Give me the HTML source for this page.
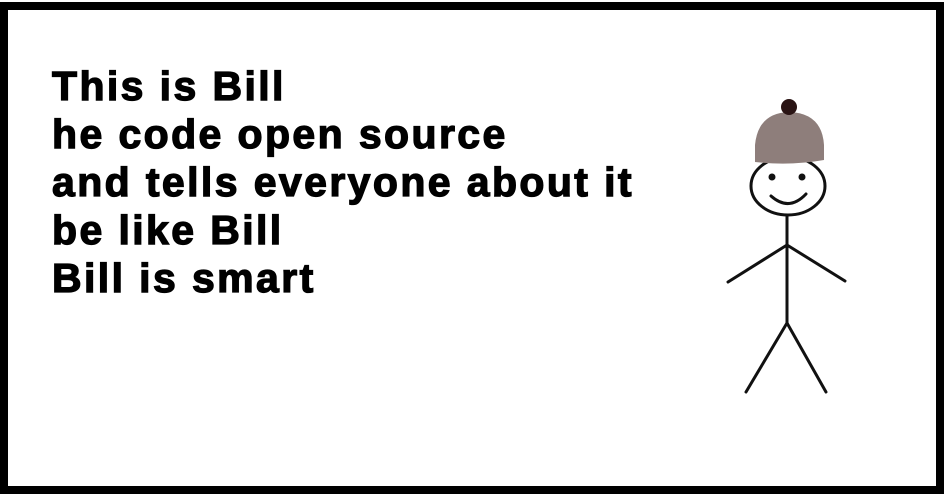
<!DOCTYPE html>
<html><head><style>
html,body{margin:0;padding:0;background:#fff;}
.frame{position:absolute;left:0;top:2px;width:928px;height:476px;border:8px solid #000;background:#fff;}
.t{position:absolute;left:52px;font:bold 41px "Liberation Sans",sans-serif;-webkit-text-stroke:1.3px #000;letter-spacing:2.4px;color:#000;white-space:nowrap;line-height:41px;}
</style></head><body>
<div class="frame"></div>
<div class="t" style="top:66px">This is Bill</div>
<div class="t" style="top:114px">he code open source</div>
<div class="t" style="top:162px">and tells everyone about it</div>
<div class="t" style="top:210px">be like Bill</div>
<div class="t" style="top:258px">Bill is smart</div>
<svg width="944" height="494" style="position:absolute;left:0;top:0">
<g stroke="#111" stroke-width="3" fill="none" stroke-linecap="round">
<ellipse cx="788" cy="186" rx="37" ry="29" fill="#fff"/>
<path d="M771 196 Q789 212 806 194"/>
<line x1="787" y1="215" x2="787" y2="323"/>
<line x1="787" y1="245" x2="728" y2="282"/>
<line x1="787" y1="245" x2="845" y2="281"/>
<line x1="787" y1="323" x2="746" y2="392"/>
<line x1="787" y1="323" x2="826" y2="392"/>
</g>
<circle cx="772" cy="177" r="3.5" fill="#111"/>
<circle cx="802" cy="177" r="3.5" fill="#111"/>
<path d="M755 162 L755 145 Q758 113 789 112 Q822 113 824 145 L824 160 Q790 166 755 162 Z" fill="#8e7e7b"/>
<circle cx="789" cy="107" r="8" fill="#2a1414"/>
</svg>
</body></html>
